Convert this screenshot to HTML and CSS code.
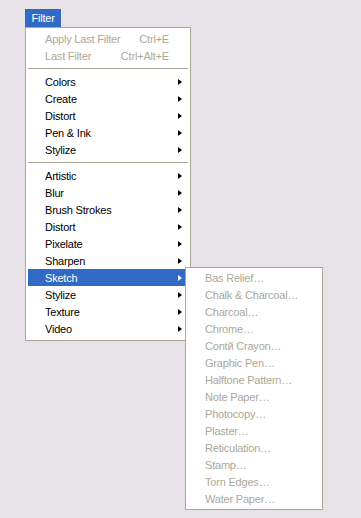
FILE: index.html
```html
<!DOCTYPE html>
<html lang="en">
<head>
    <meta charset="UTF-8">
    <title>Filter menu</title>
    <link rel="stylesheet" href="styles.css">
</head>
<body>
    <div class="page">
        <div class="menubar">
            <span class="menu-title">Filter</span>
        </div>

        <div class="menu">
            <div class="item disabled"><span class="label">Apply Last Filter</span><span class="shortcut">Ctrl+E</span><span class="arrow-cell"></span></div>
            <div class="item disabled"><span class="label">Last Filter</span><span class="shortcut">Ctrl+Alt+E</span><span class="arrow-cell"></span></div>
            <div class="separator"></div>
            <div class="item"><span class="label">Colors</span><span class="arrow-cell"><i class="arrow"></i></span></div>
            <div class="item"><span class="label">Create</span><span class="arrow-cell"><i class="arrow"></i></span></div>
            <div class="item"><span class="label">Distort</span><span class="arrow-cell"><i class="arrow"></i></span></div>
            <div class="item"><span class="label">Pen &amp; Ink</span><span class="arrow-cell"><i class="arrow"></i></span></div>
            <div class="item"><span class="label">Stylize</span><span class="arrow-cell"><i class="arrow"></i></span></div>
            <div class="separator"></div>
            <div class="item"><span class="label">Artistic</span><span class="arrow-cell"><i class="arrow"></i></span></div>
            <div class="item"><span class="label">Blur</span><span class="arrow-cell"><i class="arrow"></i></span></div>
            <div class="item"><span class="label">Brush Strokes</span><span class="arrow-cell"><i class="arrow"></i></span></div>
            <div class="item"><span class="label">Distort</span><span class="arrow-cell"><i class="arrow"></i></span></div>
            <div class="item"><span class="label">Pixelate</span><span class="arrow-cell"><i class="arrow"></i></span></div>
            <div class="item"><span class="label">Sharpen</span><span class="arrow-cell"><i class="arrow"></i></span></div>
            <div class="item active">
                <span class="label">Sketch</span><span class="arrow-cell"><i class="arrow"></i></span>
                <div class="submenu">
                    <div class="sub-item">Bas Relief…</div>
                    <div class="sub-item">Chalk &amp; Charcoal…</div>
                    <div class="sub-item">Charcoal…</div>
                    <div class="sub-item">Chrome…</div>
                    <div class="sub-item">Contй Crayon…</div>
                    <div class="sub-item">Graphic Pen…</div>
                    <div class="sub-item">Halftone Pattern…</div>
                    <div class="sub-item">Note Paper…</div>
                    <div class="sub-item">Photocopy…</div>
                    <div class="sub-item">Plaster…</div>
                    <div class="sub-item">Reticulation…</div>
                    <div class="sub-item">Stamp…</div>
                    <div class="sub-item">Torn Edges…</div>
                    <div class="sub-item">Water Paper…</div>
                </div>
            </div>
            <div class="item"><span class="label">Stylize</span><span class="arrow-cell"><i class="arrow"></i></span></div>
            <div class="item"><span class="label">Texture</span><span class="arrow-cell"><i class="arrow"></i></span></div>
            <div class="item"><span class="label">Video</span><span class="arrow-cell"><i class="arrow"></i></span></div>
        </div>
    </div>
</body>
</html>
```

FILE: styles.css
```css
html,
body {
    height: 100%;
}

body {
    margin: 0;
    padding: 0;
    background-color: #e7e2e7;
    font-family: "Liberation Sans", Arial, sans-serif;
    font-size: 11px;
    letter-spacing: -0.2px;
    color: #000;
}

.page {
    min-height: 100%;
    box-sizing: border-box;
    padding: 9px 0 0 25px;
}

.menubar {
    display: flex;
    height: 18px;
}

.menu-title {
    width: 36px;
    height: 18px;
    line-height: 18px;
    background-color: #316ac5;
    color: #fff;
    text-align: center;
}

.menu {
    position: relative;
    width: 160px;
    padding: 2px 2px 3px 2px;
    background-color: #fff;
    border: 1px solid #aca899;
}

.item {
    position: relative;
    display: flex;
    align-items: center;
    height: 17px;
    padding-left: 17px;
}

.item .label {
    flex: 1;
    white-space: nowrap;
}

.shortcut {
    white-space: nowrap;
}

.arrow-cell {
    width: 19px;
    height: 17px;
    display: flex;
    align-items: center;
}

.arrow {
    display: block;
    margin-left: 9px;
    width: 0;
    height: 0;
    border-left: 4px solid #000;
    border-top: 3.5px solid transparent;
    border-bottom: 3.5px solid transparent;
}

.disabled {
    color: #aca899;
}

.active {
    background-color: #316ac5;
    color: #fff;
}

.active .arrow {
    border-left-color: #fff;
}

.separator {
    height: 9px;
    display: flex;
    align-items: center;
}

.separator::before {
    content: "";
    display: block;
    width: 100%;
    height: 1px;
    background-color: #aca899;
}

.submenu {
    position: absolute;
    left: 157px;
    top: -2px;
    z-index: 2;
    width: 132px;
    padding: 2px 2px 1px 2px;
    background-color: #fff;
    border: 1px solid #aca899;
    color: #aca899;
}

.sub-item {
    height: 17px;
    line-height: 17px;
    padding-left: 17px;
    white-space: nowrap;
}
```
